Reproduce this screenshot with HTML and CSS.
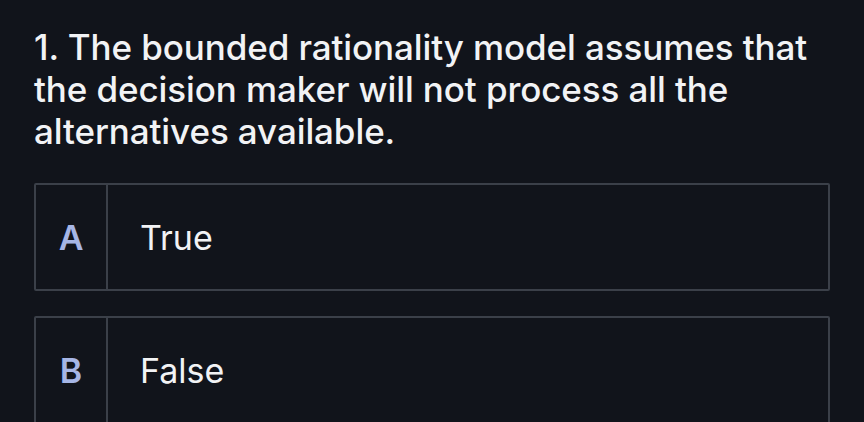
FILE: index.html
```html
<!DOCTYPE html>
<html>
<head>
<meta charset="utf-8">
<link rel="stylesheet" href="styles.css">
</head>
<body>
<main class="quiz">
  <h1 class="question">1. The bounded rationality model assumes that the decision maker will not process all the alternatives available.</h1>
  <div class="options">
    <div class="option">
      <div class="letter">A</div>
      <div class="label">True</div>
    </div>
    <div class="option">
      <div class="letter">B</div>
      <div class="label">False</div>
    </div>
  </div>
</main>
</body>
</html>
```
FILE: styles.css
```css
html, body {
  margin: 0;
  padding: 0;
  background: #11141b;
  height: 100%;
  overflow: hidden;
}
.quiz {
  padding: 26px 34px 0 34px;
  font-family: Inter, "Liberation Sans", sans-serif;
  color: #f2f3f5;
}
.question {
  margin: 0;
  font-size: 35px;
  line-height: 42px;
  font-weight: 500;
  letter-spacing: -0.1px;
  width: 790px;
}
.options {
  margin-top: 31px;
  display: flex;
  flex-direction: column;
  gap: 25px;
  width: 796px;
}
.option {
  display: flex;
  height: 104px;
  border: 2px solid #3b4049;
  border-radius: 2px;
}
.letter {
  width: 70px;
  border-right: 2px solid #3b4049;
  display: flex;
  align-items: center;
  justify-content: center;
  font-size: 34px;
  font-weight: 600;
  color: #a6b6e6;
}
.label {
  display: flex;
  align-items: center;
  padding-left: 32px;
  font-size: 34px;
  font-weight: 400;
}
```
